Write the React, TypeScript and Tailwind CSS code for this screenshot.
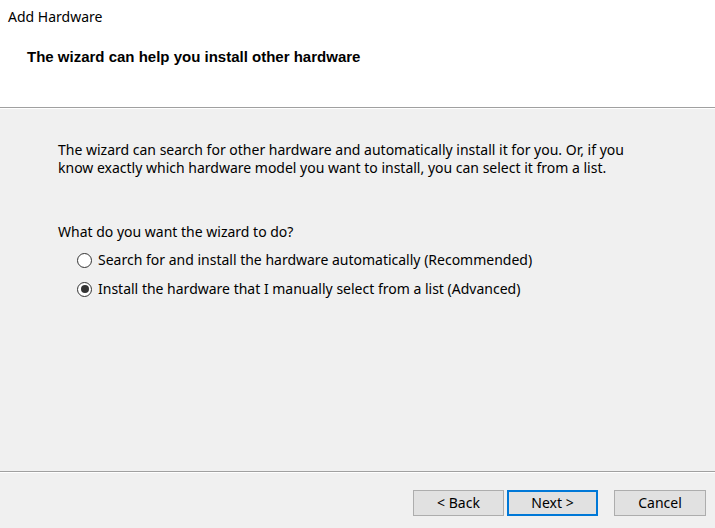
import { useState } from 'react';

const OPTIONS = [
  'Search for and install the hardware automatically (Recommended)',
  'Install the hardware that I manually select from a list (Advanced)',
];

function Radio({ checked }: { checked: boolean }) {
  return (
    <span className="w-[15px] h-[15px] rounded-full border border-[#333] bg-white flex items-center justify-center shrink-0">
      {checked && <span className="w-[8px] h-[8px] rounded-full bg-[#333]" />}
    </span>
  );
}

export default function App() {
  const [choice, setChoice] = useState(1);

  return (
    <div className="w-[715px] h-[528px] flex flex-col bg-[#f0f0f0] text-black font-['Noto_Sans',sans-serif] text-[14px] overflow-hidden">
      {/* Header */}
      <div className="h-[108px] bg-white shrink-0 border-b border-[#a0a0a0]">
        <div className="pl-[8px] pt-[8px] leading-[18px]">Add Hardware</div>
        <div className="pl-[27px] pt-[22px] font-['Liberation_Sans',sans-serif] font-bold text-[15px] leading-[18px]">
          The wizard can help you install other hardware
        </div>
      </div>
      <div className="h-px bg-white shrink-0" />

      {/* Body */}
      <div className="flex-1 pl-[58px] pt-[32px] leading-[18px]">
        <p>
          The wizard can search for other hardware and automatically install it for you. Or, if you
          <br />
          know exactly which hardware model you want to install, you can select it from a list.
        </p>
        <p className="mt-[46px]">What do you want the wizard to do?</p>
        <div className="mt-[10px] pl-[19px] flex flex-col gap-[11px]">
          {OPTIONS.map((label, i) => (
            <label key={i} className="flex items-center gap-[6px] cursor-default" onClick={() => setChoice(i)}>
              <Radio checked={choice === i} />
              <span>{label}</span>
            </label>
          ))}
        </div>
      </div>

      {/* Footer */}
      <div className="h-px bg-[#a0a0a0] shrink-0" />
      <div className="h-px bg-white shrink-0" />
      <div className="h-[55px] shrink-0 flex items-start pt-[17px] pl-[413px]">
        <button className="w-[91px] h-[26px] border border-[#adadad] bg-[#e1e1e1] leading-none">&lt; Back</button>
        <button className="ml-[3px] w-[91px] h-[26px] border-2 border-[#0078d7] bg-[#e1e1e1] leading-none">Next &gt;</button>
        <button className="ml-[16px] w-[92px] h-[26px] border border-[#adadad] bg-[#e1e1e1] leading-none">Cancel</button>
      </div>
    </div>
  );
}
